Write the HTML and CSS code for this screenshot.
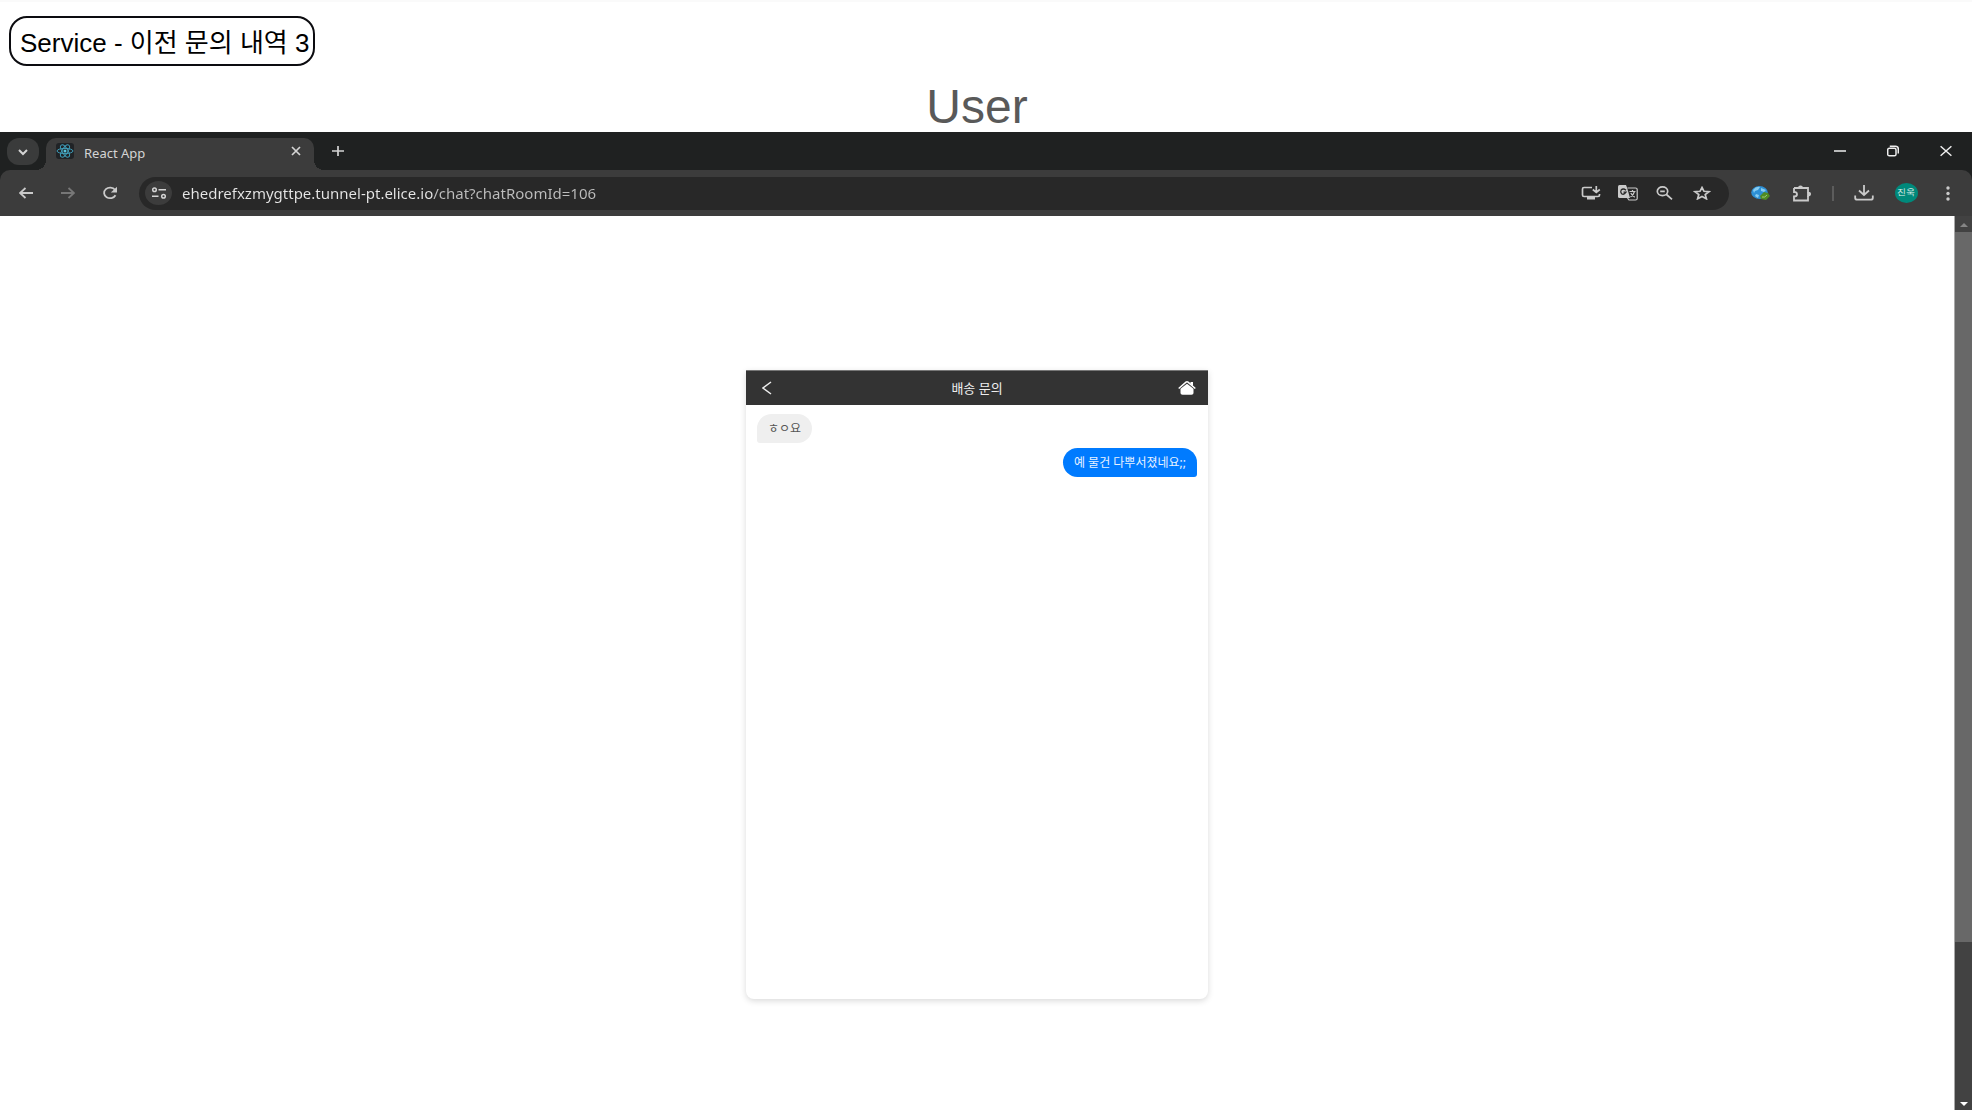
FILE: index.html
```html
<!DOCTYPE html>
<html lang="ko">
<head>
<meta charset="utf-8">
<meta name="viewport" content="width=device-width, initial-scale=1">
<title>Service - 이전 문의 내역 3</title>
<link rel="stylesheet" href="styles.css">
</head>
<body>
<header class="intro">
  <h1 class="label">Service - 이전 문의 내역 3</h1>
  <h2 class="role">User</h2>
</header>

<section class="browser">
  <div class="tabstrip">
    <button class="tab-search" aria-label="Search tabs">
      <svg width="12" height="8" viewBox="0 0 12 8"><path d="M2 2l4 4 4-4"/></svg>
    </button>
    <div class="tab">
      <span class="favicon">
        <svg width="18" height="14" viewBox="0 0 18 14"><g class="react"><ellipse cx="9" cy="7" rx="8" ry="2.6"/><ellipse cx="9" cy="7" rx="7" ry="2.8" transform="rotate(58 9 7)"/><ellipse cx="9" cy="7" rx="7" ry="2.8" transform="rotate(-58 9 7)"/></g><circle class="nucleus" cx="9" cy="7" r="1.5"/></svg>
      </span>
      <span class="tab-title">React App</span>
      <button class="tab-close" aria-label="Close tab">
        <svg width="10" height="10" viewBox="0 0 10 10"><path d="M1 1l8 8M9 1l-8 8"/></svg>
      </button>
    </div>
    <button class="tab-new" aria-label="New tab">
      <svg width="12" height="12" viewBox="0 0 12 12"><path d="M0 6h12M6 1v10"/></svg>
    </button>
    <div class="window-controls">
      <button class="win" aria-label="Minimize"><svg width="12" height="12" viewBox="0 0 12 12"><path d="M0 6h12"/></svg></button>
      <button class="win" aria-label="Restore"><svg width="12" height="12" viewBox="0 0 12 12"><rect x=".7" y="3.2" width="8.3" height="7.6" rx="1.6"/><path d="M2.8 1.2h5.6q2.9 0 2.9 2.8v4.6"/></svg></button>
      <button class="win" aria-label="Close"><svg width="12" height="12" viewBox="0 0 12 12"><path d="M.6 1.2l10.800 9.600M11.400 1.200L.6 10.800"/></svg></button>
    </div>
  </div>

  <div class="toolbar">
    <button class="tool" aria-label="Back"><svg width="14" height="12" viewBox="0 0 14 12"><path d="M14 6H1M6.500 1L1 6l5.500 5"/></svg></button>
    <button class="tool dim" aria-label="Forward"><svg width="14" height="12" viewBox="0 0 14 12"><path d="M0 6h13M7.500 1L13 6l-5.500 5"/></svg></button>
    <button class="tool" aria-label="Reload"><svg width="16" height="14" viewBox="0 0 16 14"><path d="M13.500 9.200A6 5.300 0 1 1 13 3.800"/><path class="fill" d="M15 .8v5.700H8.800z"/></svg></button>
    <div class="omnibox">
      <button class="site-info" aria-label="Site information"><svg width="16" height="12" viewBox="0 0 16 12"><circle cx="3.500" cy="2.800" r="1.800"/><path d="M7.500 2.800H15M1 9.200h6.500"/><circle cx="12.500" cy="9.200" r="1.800"/></svg></button>
      <input class="url" type="text" aria-label="Address" spellcheck="false" value="ehedrefxzmygttpe.tunnel-pt.elice.io/chat?chatRoomId=106">
      <button class="action" aria-label="Install app"><svg width="20" height="14" viewBox="0 0 20 14"><path d="M11 1.500H3Q1.500 1.500 1.500 3v6q0 1.500 1.500 1.500h14q1.500 0 1.500-1.500V8M15.300 0v6M11.800 3.500l3.500 3 3.500-3"/><path class="fill" d="M6 11h8v2.500H6z"/></svg></button>
      <button class="action" aria-label="Translate"><svg width="20" height="16" viewBox="0 0 20 16"><path class="fill" d="M1.500 0H8l1 2.500h0L12 13H1.500Q0 13 0 11.500v-10Q0 0 1.500 0z"/><path class="ink" d="M8 5.200Q5.200 2.800 3.200 5q-1.200 2 .4 3.700Q6 10.200 8 7.200H5.500"/><path class="thin" d="M9.500 3h8q1.700 0 1.700 1.500v9q0 1.500-1.700 1.500H11l-1.500-2M11.500 6.500h6M14.500 5v1.500M16.500 6.500q-1 3.500-4 5.500M12.800 8q1.500 2.700 4 4.300"/></svg></button>
      <button class="action" aria-label="Zoom"><svg width="17" height="14" viewBox="0 0 17 14"><ellipse cx="6.500" cy="5.300" rx="5.200" ry="4.400"/><path d="M10.500 8.500l5.500 4.800M4.200 5.300h4.600"/></svg></button>
      <button class="action" aria-label="Bookmark"><svg width="18" height="14" viewBox="0 0 18 14"><path d="M9 1.500l2 3.800 5 .4-3.800 2.900 1.200 4.200L9 10.500l-4.400 2.300 1.200-4.200L2 5.700l5-.4z"/></svg></button>
    </div>
    <button class="tool" aria-label="Web extension"><svg width="19" height="14" viewBox="0 0 19 14"><ellipse class="globe" cx="8.500" cy="6.500" rx="8.300" ry="6.400"/><path class="shine" d="M2 4q3-4 7-3l-2 3-3 1-1 2zM10 2l5 2-2 2-3-1zM5 8l3 1-1 3-3-2z"/><path class="leaf" d="M9 10l4-4 4 1 2 3-4 4-5-1z"/><path class="leaf-line" d="M11 11q3 1 5-2"/></svg></button>
    <button class="tool" aria-label="Extensions"><svg width="20" height="17" viewBox="0 0 20 17"><path d="M2 3h4.500M10.500 3H16v4.500M16 11v4.500H2v-4q3 0 3-2.300T2 7V3"/><path d="M6 3h5M16 7v5"/><path class="fill" d="M6 3q0-2.600 2.500-2.600T11 3zM16 6.800q3 0 3 2.300t-3 2.300z"/></svg></button>
    <span class="divider"></span>
    <button class="tool" aria-label="Downloads"><svg width="20" height="16" viewBox="0 0 20 16"><path d="M10 0v10M5 5.500l5 4.500 5-4.500M1.200 10.500V13q0 1.700 2 1.700h13.600q2 0 2-1.700v-2.500"/></svg></button>
    <button class="tool" aria-label="Profile"><span class="avatar">진욱</span></button>
    <button class="tool" aria-label="Menu"><svg width="4" height="15" viewBox="0 0 4 15"><circle class="fill" cx="2" cy="2" r="1.700"/><circle class="fill" cx="2" cy="7.500" r="1.700"/><circle class="fill" cx="2" cy="13" r="1.700"/></svg></button>
  </div>

  <div class="viewport">
    <main class="page">
      <article class="chat">
        <header class="chat-head">
          <button class="chat-nav" aria-label="뒤로"><svg width="10" height="14" viewBox="0 0 10 14"><path d="M9 1L1 7l8 6"/></svg></button>
          <h3 class="chat-title">배송 문의</h3>
          <button class="chat-nav" aria-label="홈"><svg width="18" height="14" viewBox="0 0 18 14"><path class="house" d="M9 2.800l6.500 5V12q0 1.700-2 1.700h-9q-2 0-2-1.700V7.800z"/><path class="roof" d="M.7 7.500L8 1.200q1-.8 2 0l7.300 6.300"/><path class="house" d="M12.500 1h2.500v4l-2.500-2z"/></svg></button>
        </header>
        <div class="messages">
          <p class="bubble theirs">ㅎㅇ요</p>
          <p class="bubble mine">예 물건 다뿌서졌네요;;</p>
        </div>
      </article>
    </main>
    <div class="scrollbar">
      <span class="arrow up"><svg width="8" height="4" viewBox="0 0 8 4"><path d="M0 4l4-4 4 4z"/></svg></span>
      <div class="track"><div class="thumb"></div></div>
      <span class="arrow down"><svg width="8" height="4" viewBox="0 0 8 4"><path d="M0 0l4 4 4-4z"/></svg></span>
    </div>
  </div>
</section>
</body>
</html>
```
FILE: styles.css
```css
* { box-sizing: border-box; }

body {
  margin: 0;
  min-height: 100vh;
  display: flex;
  flex-direction: column;
  background: #fff;
  font-family: "Liberation Sans", "Noto Sans CJK KR", sans-serif;
}

h1, h2, h3, p { margin: 0; font-weight: 400; }

button {
  display: flex;
  align-items: center;
  justify-content: center;
  padding: 0;
  border: 0;
  background: none;
  color: inherit;
}

svg { display: block; fill: none; stroke: currentColor; stroke-width: 2; }
svg .fill { fill: currentColor; stroke: none; }

/* Heading above the browser window */
.intro {
  height: 132px;
  padding: 14px 9px 0;
  border-top: 2px solid #fafafa;
}

.label {
  width: max-content;
  height: 50px;
  padding: 0 4px 0 9px;
  border: 2px solid #0c0c10;
  border-radius: 18px;
  color: #000;
  font-size: 26px;
  line-height: 50px;
}

.role {
  margin-top: 13px;
  padding-right: 18px;
  color: #595959;
  font-size: 48px;
  line-height: 56px;
  text-align: center;
}

/* Browser window */
.browser {
  flex: 1;
  display: flex;
  flex-direction: column;
  background: #1f2121;
  color: #d4d4d4;
  font-family: "Noto Sans", "Noto Sans CJK KR", sans-serif;
}

.tabstrip {
  display: flex;
  height: 38px;
  padding: 6px 0 0 7px;
}

.tab-search {
  width: 32px;
  height: 27px;
  border-radius: 12px;
  background: #3a3b3b;
}

.tab {
  position: relative;
  display: flex;
  align-items: center;
  width: 268px;
  margin-left: 7px;
  padding: 0 6px 6px 10px;
  border-radius: 10px 10px 0 0;
  background: #3c3c3c;
}

.tab::before,
.tab::after {
  content: "";
  position: absolute;
  bottom: 0;
  width: 10px;
  height: 10px;
}
.tab::before { right: 100%; background: radial-gradient(circle at 0 0, transparent 10px, #3c3c3c 10px); }
.tab::after { left: 100%; background: radial-gradient(circle at 100% 0, transparent 10px, #3c3c3c 10px); }

.favicon {
  padding: 1px 0;
  border-radius: 3px;
  background: #202326;
}
.react { stroke: #3f9db8; stroke-width: 1; }
.nucleus { fill: #58c4dc; stroke: none; }

.tab-title {
  flex: 1;
  padding: 3px 0 0 10px;
  font-size: 13px;
  line-height: 18px;
}

.tab-close, .tab-new { width: 24px; height: 26px; }
.tab-close svg, .tab-new svg { stroke-width: 1.700; }
.tab-new { margin-left: 12px; }

.window-controls { display: flex; margin-left: auto; color: #eee; }
.win { width: 53px; height: 26px; }
.win svg { stroke-width: 1.500; }

.toolbar {
  display: flex;
  align-items: center;
  height: 46px;
  padding: 0 3px 0 5px;
  border-radius: 10px 10px 0 0;
  background: #3c3c3c;
}

.tool { width: 42px; height: 32px; color: #cacaca; }
.tool svg { stroke-width: 1.800; }
.dim { color: #777; }

.omnibox {
  flex: 1;
  display: flex;
  align-items: center;
  height: 33px;
  margin: 0 10px 0 8px;
  padding: 0 9px 0 6px;
  border-radius: 17px;
  background: #282828;
}

.site-info {
  width: 27px;
  height: 24px;
  border-radius: 50%;
  background: #3c3c3c;
}
.site-info svg { stroke-width: 1.500; }

.url {
  flex: 1;
  min-width: 0;
  height: 30px;
  margin-left: 10px;
  padding: 0;
  border: 0;
  outline: 0;
  background: linear-gradient(90deg, #e6e6e6 251px, #bdbdbd 251px);
  background-clip: text;
  -webkit-background-clip: text;
  color: transparent;
  font: 15px/30px "Noto Sans", sans-serif;
}

.action { width: 37px; height: 30px; color: #cacaca; }
.action svg { stroke-width: 1.700; }
.action .ink { stroke: #282828; stroke-width: 1.300; }
.action .thin { stroke-width: 1.200; }

.globe { fill: #2d8fd5; stroke: none; }
.shine { fill: #86cdf2; stroke: none; }
.leaf { fill: #4f8a22; stroke: none; }
.leaf-line { stroke: #a0c878; stroke-width: 1; }

.divider {
  width: 2px;
  height: 15px;
  margin: 0 9px;
  background: #5c5c5c;
}

.avatar {
  width: 23px;
  height: 20px;
  border-radius: 50%;
  background: #00897b;
  color: #e4f2f0;
  font-size: 9px;
  line-height: 19px;
  text-align: center;
}

.viewport { flex: 1; display: flex; }

.page {
  flex: 1;
  padding: 154px 16px 32px;
  border-right: 1px solid #a8a8a8;
  background: #fff;
}

/* Chat card */
.chat {
  max-width: 462px;
  min-height: 629px;
  margin: 0 auto;
  border-radius: 0 0 8px 8px;
  background: #fff;
  box-shadow: 0 2px 6px rgba(0, 0, 0, .15);
}

.chat-head {
  display: flex;
  align-items: center;
  justify-content: space-between;
  height: 35px;
  padding: 0 11px;
  border-top: 1px solid #777;
  background: #333;
  color: #eee;
}
.chat-nav { width: 20px; height: 24px; }
.chat-nav svg { stroke-width: 1.500; }
.chat-title { font-size: 13px; line-height: 20px; }
.house { fill: #fff; stroke: none; }
.roof { stroke: #fff; }

.messages {
  display: flex;
  flex-direction: column;
  gap: 5px;
  padding: 9px 11px;
}

.bubble {
  padding: 0 11px;
  border-radius: 15px;
  font-size: 12px;
  line-height: 29px;
}
.theirs {
  align-self: flex-start;
  border-bottom-left-radius: 3px;
  background: #efefef;
  color: #555;
}
.mine {
  align-self: flex-end;
  border-bottom-right-radius: 3px;
  background: #007bff;
  color: #e8f2ff;
}

/* Page scrollbar */
.scrollbar {
  display: flex;
  flex-direction: column;
  width: 17px;
  background: #424242;
}
.arrow { display: flex; justify-content: center; }
.arrow svg { fill: currentColor; stroke: none; }
.up { height: 16px; padding-top: 7px; color: #858585; }
.down { height: 12px; padding-top: 4px; color: #fff; }
.track { flex: 1; display: flex; flex-direction: column; }
.thumb { flex: 0 0 82%; background: #686868; }
```
